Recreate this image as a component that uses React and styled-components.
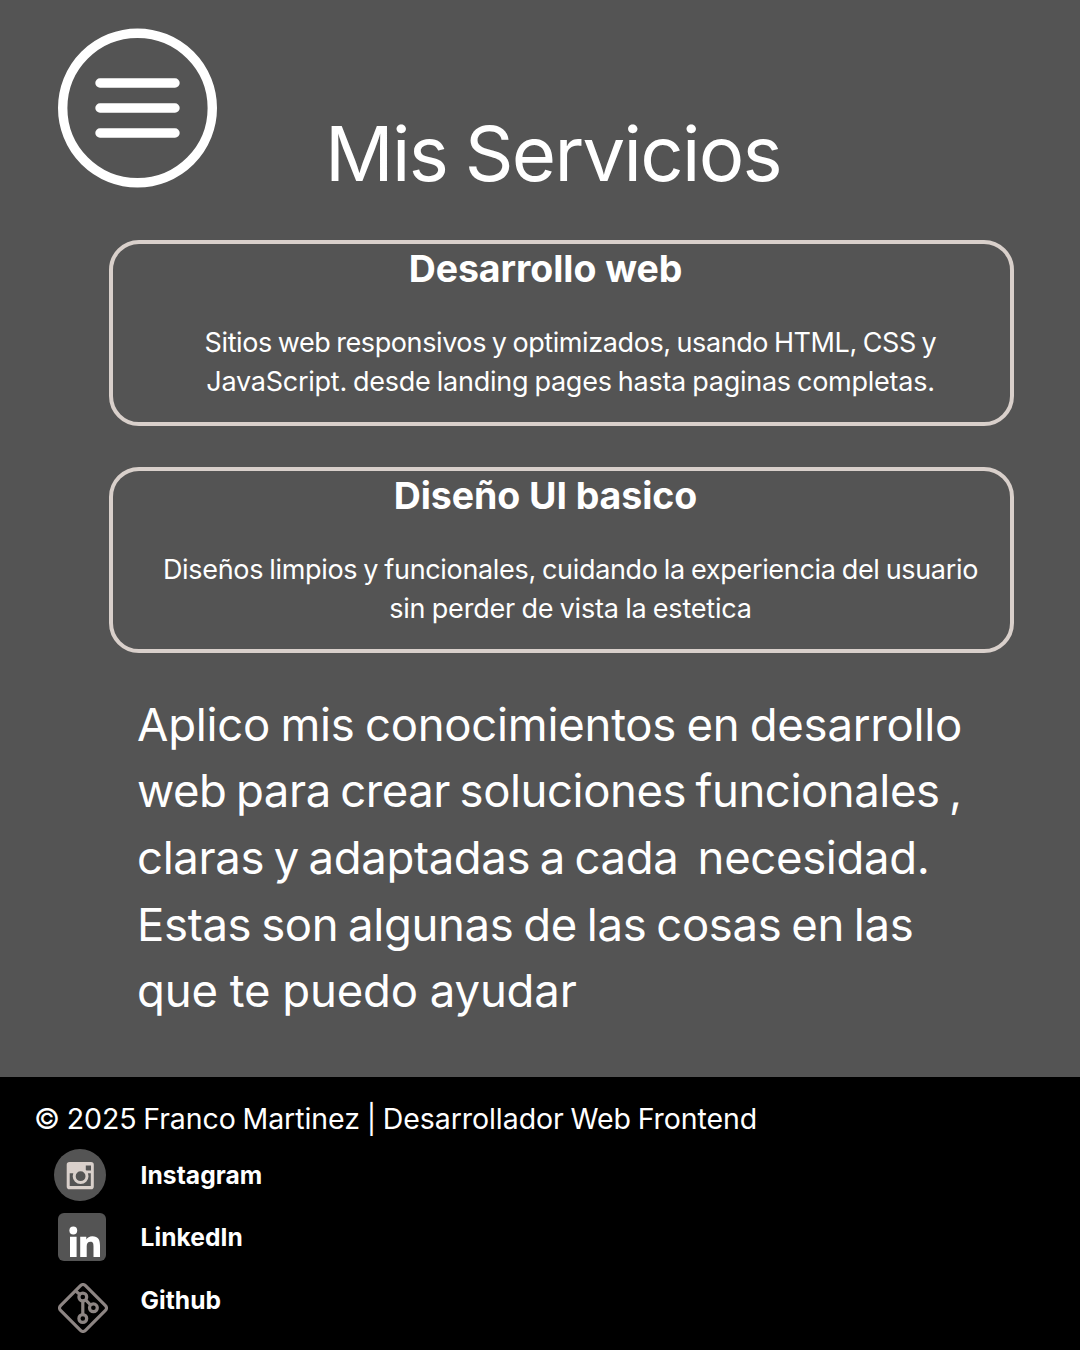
import React from "react";
import styled, { createGlobalStyle } from "styled-components";

const GlobalStyle = createGlobalStyle`
  * { box-sizing: border-box; margin: 0; padding: 0; }
  body { margin: 0; background: #545454; font-family: Inter, "Liberation Sans", sans-serif; color: #fff; }
`;

const Page = styled.div`
  width: 1080px;
  height: 1350px;
  display: flex;
  flex-direction: column;
  background: #545454;
  overflow: hidden;
`;

const Header = styled.header`
  display: flex;
  height: 240px;
  padding: 28px 0 0 57px;
`;

const MenuButton = styled.button`
  width: 161px;
  height: 161px;
  border: 0;
  background: none;
  svg { display: block; }
`;

const Title = styled.h1`
  margin: 79px 0 0 107px;
  font-size: 76px;
  line-height: 92px;
  font-weight: 400;
  letter-spacing: -1.7px;
  word-spacing: -2px;
  white-space: pre;
`;

const Services = styled.main`
  display: flex;
  flex-direction: column;
  gap: 41px;
  padding-left: 109px;
`;

const Card = styled.section`
  width: 905px;
  height: 186px;
  border: 4px solid #d9d0cb;
  border-radius: 30px;
  display: flex;
  flex-direction: column;
  align-items: center;
  padding-left: 18px;
`;

const CardTitle = styled.h2`
  margin-right: 50px;
  font-size: 37.5px;
  line-height: 50px;
  font-weight: 700;
  letter-spacing: -0.07px;
`;

const CardText = styled.div`
  margin-top: 29px;
  display: flex;
  flex-direction: column;
  align-items: center;
  font-size: 27px;
  line-height: 39px;
`;

const Line = styled.span`
  display: block;
  white-space: pre;
  letter-spacing: ${(p) => p.$letter}px;
  word-spacing: ${(p) => p.$word}px;
`;

const Intro = styled.p`
  margin: 38.6px 0 0 137px;
  height: 385.4px;
  font-size: 45.5px;
  line-height: 66.7px;
`;

const Footer = styled.footer`
  flex: 1;
  background: #000;
  padding: 23px 0 0 34px;
`;

const Copyright = styled.p`
  font-size: 28.5px;
  line-height: 38px;
`;

const Socials = styled.ul`
  list-style: none;
  display: flex;
  flex-direction: column;
  padding-left: 20px;
`;

const Social = styled.li`
  display: flex;
  height: ${(p) => p.$height}px;
  svg { display: block; }
`;

const SocialIcon = styled.span`
  width: 86.5px;
  padding: ${(p) => p.$pad};
`;

const SocialLabel = styled.a`
  padding-top: ${(p) => p.$top}px;
  font-size: 24.6px;
  line-height: 30px;
  font-weight: 700;
  letter-spacing: 0.05px;
`;

const cards = [
  {
    title: "Desarrollo web",
    lines: [
      ["Sitios web responsivos y optimizados, usando HTML, CSS y", -0.4, -1.4],
      ["JavaScript. desde landing pages hasta paginas completas.", -0.25, -1.2],
    ],
  },
  {
    title: "Diseño UI basico",
    lines: [
      ["Diseños limpios y funcionales, cuidando la experiencia del usuario", -0.33, -1.1],
      ["sin perder de vista la estetica", -0.2, -1],
    ],
  },
];

const intro = [
  ["Aplico mis conocimientos en desarrollo", -0.25, -2.2],
  ["web para crear soluciones funcionales ,", -0.45, -2.8],
  ["claras y adaptadas a cada  necesidad.", -0.35, -2.9],
  ["Estas son algunas de las cosas en las", -0.35, -2.6],
  ["que te puedo ayudar", -0.17, -0.7],
];

const MenuIcon = () => (
  <svg width="161" height="161" viewBox="0 0 161 161" fill="none" stroke="#fff" strokeWidth="9.4">
    <circle cx="80.5" cy="80" r="74.8" />
    <path d="M43 55H118M43 80H118M43 105H118" strokeLinecap="round" />
  </svg>
);

const InstagramIcon = () => (
  <svg width="52" height="52" viewBox="0 0 52 52">
    <circle cx="26" cy="26" r="26" fill="#545454" />
    <path fill="#d9d0cb" fillRule="evenodd" d="M15.500 13H37a2.800 2.800 0 0 1 2.800 2.800V37.400a2.800 2.800 0 0 1-2.800 2.800H15.500a2.800 2.800 0 0 1-2.800-2.800V15.800a2.800 2.800 0 0 1 2.800-2.800ZM31.800 16.500V21.500H37V16.500ZM15.700 24.300V37H36.800V24.300Z" />
    <circle cx="26.600" cy="27.200" r="6.400" fill="#545454" stroke="#d9d0cb" strokeWidth="3" />
  </svg>
);

const LinkedinIcon = () => (
  <svg width="48" height="48" viewBox="0 0 48 48">
    <rect width="48" height="48" rx="6" fill="#545454" />
    <circle cx="15.300" cy="17.500" r="3.900" fill="#fff" />
    <path fill="#fff" d="M12 23.800H18.600V44H12ZM22.200 23.800H28.300V26.600C29.300 24.600 31.500 23.300 34.300 23.300C40.300 23.300 42 27 42 32.500V44H35.500V33.500C35.500 31 35.300 28.800 32.600 28.800C29.700 28.800 28.700 30.800 28.700 33.500V44H22.200Z" />
  </svg>
);

const GitIcon = () => (
  <svg width="50" height="50" viewBox="0 0 50 50" fill="none" stroke="#8d8583" strokeWidth="3.2">
    <rect x="7.400" y="7.400" width="35.200" height="35.200" rx="3.500" transform="rotate(45 25 25)" />
    <circle cx="24.800" cy="14" r="3.900" />
    <circle cx="35.400" cy="24.800" r="3.900" />
    <circle cx="24.800" cy="35.500" r="3.900" />
    <path d="M24.800 18V31.500M27.600 16.800L32.600 22M17 7.500L22 11.500" />
  </svg>
);

const socials = [
  { name: "Instagram", Icon: InstagramIcon, height: 62, pad: "11px 0 0 0", top: 22 },
  { name: "LinkedIn", Icon: LinkedinIcon, height: 62, pad: "13px 0 0 4px", top: 22 },
  { name: "Github", Icon: GitIcon, height: 70, pad: "21px 0 0 4px", top: 23 },
];

export default function App() {
  return (
    <Page>
      <GlobalStyle />
      <Header>
        <MenuButton aria-label="Menu"><MenuIcon /></MenuButton>
        <Title>Mis Servicios</Title>
      </Header>
      <Services>
        {cards.map((c) => (
          <Card key={c.title}>
            <CardTitle>{c.title}</CardTitle>
            <CardText>
              {c.lines.map(([t, l, w]) => <Line key={t} $letter={l} $word={w}>{t}</Line>)}
            </CardText>
          </Card>
        ))}
      </Services>
      <Intro>
        {intro.map(([t, l, w]) => <Line key={t} $letter={l} $word={w}>{t}</Line>)}
      </Intro>
      <Footer>
        <Copyright><Line $letter={-0.07} $word={-1.2}>© 2025 Franco Martinez | Desarrollador Web Frontend</Line></Copyright>
        <Socials>
          {socials.map(({ name, Icon, height, pad, top }) => (
            <Social key={name} $height={height}>
              <SocialIcon $pad={pad}><Icon /></SocialIcon>
              <SocialLabel $top={top}>{name}</SocialLabel>
            </Social>
          ))}
        </Socials>
      </Footer>
    </Page>
  );
}
